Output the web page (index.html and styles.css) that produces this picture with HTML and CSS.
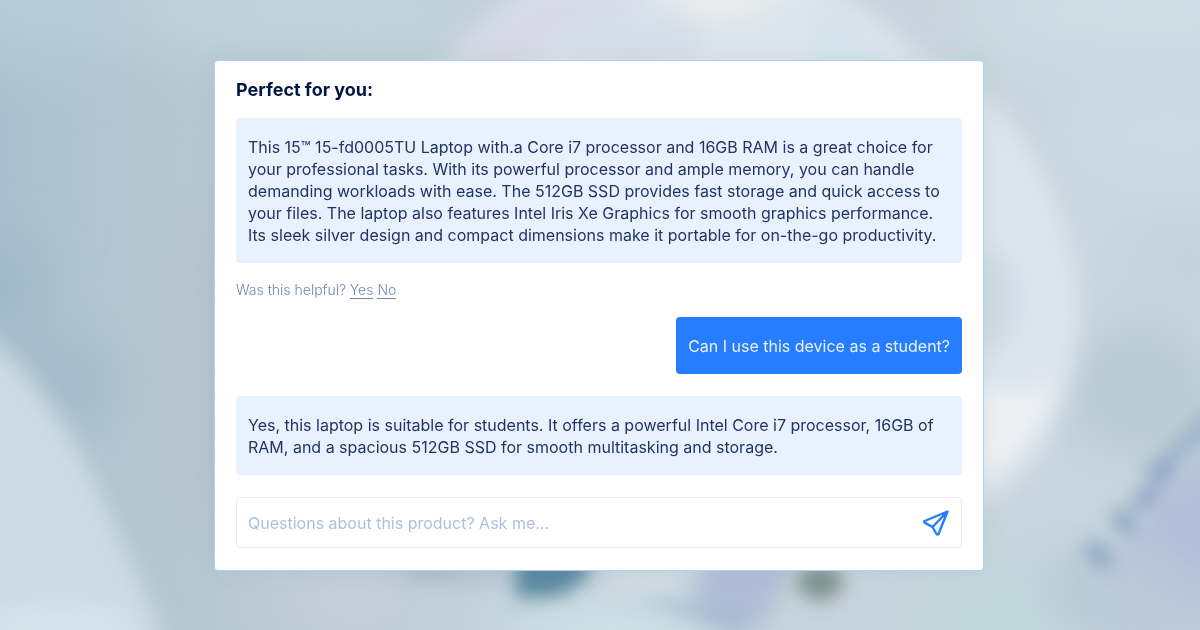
FILE: index.html
```html
<!DOCTYPE html>
<html lang="en">
<head>
<meta charset="utf-8">
<meta name="viewport" content="width=device-width, initial-scale=1">
<title>Product assistant</title>
<link rel="stylesheet" href="styles.css">
</head>
<body>
<svg class="backdrop" viewBox="0 0 1200 630" preserveAspectRatio="xMidYMid slice" aria-hidden="true">
  <defs>
    <linearGradient id="base" x1="0" y1="0" x2="1" y2="0">
      <stop offset="0" stop-color="#abc0ce"/>
      <stop offset=".17" stop-color="#b7c8d1"/>
      <stop offset=".4" stop-color="#c2d1d9"/>
      <stop offset=".8" stop-color="#c8d5dc"/>
      <stop offset="1" stop-color="#cad8df"/>
    </linearGradient>
    <filter id="soft" x="-50%" y="-50%" width="200%" height="200%"><feGaussianBlur stdDeviation="11"/></filter>
    <filter id="spot" x="-50%" y="-50%" width="200%" height="200%"><feGaussianBlur stdDeviation="9"/></filter>
    <filter id="wide" x="-50%" y="-50%" width="200%" height="200%"><feGaussianBlur stdDeviation="30"/></filter>
  </defs>
  <rect width="1200" height="630" fill="url(#base)"/>
  <g filter="url(#wide)">
    <ellipse cx="60" cy="0" rx="130" ry="60" fill="#b8cbd9"/>
    <ellipse cx="290" cy="10" rx="170" ry="50" fill="#c1d3da"/>
    <ellipse cx="0" cy="285" rx="30" ry="40" fill="#97b2c1"/>
    <ellipse cx="60" cy="385" rx="60" ry="40" fill="#a4bac9"/>
    <ellipse cx="205" cy="370" rx="40" ry="170" fill="#b5c3cd"/>
    <ellipse cx="1130" cy="10" rx="160" ry="40" fill="#cfe0e5"/>
    <ellipse cx="1160" cy="133" rx="90" ry="28" fill="#cfdfe6"/>
    <ellipse cx="1190" cy="261" rx="50" ry="25" fill="#bccbda"/>
    <ellipse cx="1140" cy="390" rx="80" ry="70" fill="#b9cad1"/>
    <ellipse cx="1000" cy="620" rx="90" ry="50" fill="#c1d8d9"/>
    <ellipse cx="1085" cy="580" rx="50" ry="25" fill="#b2c4d3"/>
    <ellipse cx="1160" cy="620" rx="90" ry="35" fill="#b9c8d8"/>
    <ellipse cx="610" cy="635" rx="110" ry="25" fill="#d4eaec"/>
    <ellipse cx="345" cy="600" rx="80" ry="35" fill="#c5cfda"/>
  </g>
  <g filter="url(#soft)">
    <path d="M425 95Q490-10 600-40H760Q860-10 910 50Q985 80 1030 150Q1082 240 1080 330Q1070 400 1040 450Q1015 490 970 507V95Z" fill="#dde5ec"/>
    <path d="M430 85Q500-5 590-20L660 0Q560 30 520 85Z" fill="#d7dae5"/>
    <ellipse cx="633" cy="42" rx="75" ry="25" fill="#d4dee6"/>
    <path d="M640-30H825L750 15L700 20Z" fill="#e9ecec"/>
    <path d="M810 0Q870 10 890 75H810Z" fill="#d5e4ea"/>
    <ellipse cx="994" cy="300" rx="26" ry="52" fill="#cfdce4"/>
    <path d="M970 375Q1010 410 1058 380Q1045 440 970 490Z" fill="#edf0f3"/>
    <path d="M-30 325Q20 360 45 398Q85 450 110 515Q140 575 160 630L166 680H-30Z" fill="#cddbe2"/>
    <ellipse cx="60" cy="625" rx="80" ry="20" fill="#d4e3e9"/>
    <path d="M1230 425L1190 465L1155 500L1130 540L1150 600L1230 630Z" fill="#b3bfd7"/>
    <path d="M1130 530L1230 600V635L1100 570Z" fill="#b9c6d8"/>
    <path d="M375 560H520V575L480 582L405 574Z" fill="#b5c1d0"/>
    <path d="M605 570H695L670 591H620Z" fill="#d5e0e4"/>
    <path d="M710 560H795L765 625L720 625L690 600Z" fill="#b0bdd6"/>
    <path d="M800 592H860L840 604H800Z" fill="#c8d1dd"/>
  </g>
  <g filter="url(#spot)">
    <path d="M1215 400L1160 455L1165 475L1215 430Z" fill="#9bb2c9"/>
    <ellipse cx="1161" cy="472" rx="15" ry="12" fill="#8fa5c5"/>
    <ellipse cx="1146" cy="498" rx="18" ry="10" transform="rotate(-30 1146 498)" fill="#94a5c6"/>
    <ellipse cx="1124" cy="522" rx="16" ry="10" transform="rotate(40 1124 522)" fill="#8ea5c2"/>
    <ellipse cx="1099" cy="555" rx="17" ry="10" transform="rotate(45 1099 555)" fill="#8ba5c0"/>
    <path d="M516 555H588V578L560 596L516 598Z" fill="#5b89a0"/>
    <ellipse cx="820" cy="582" rx="23" ry="18" fill="#7f938f"/>
    <path d="M630 598L745 610V632L690 617Z" fill="#a6bad0"/>
    <ellipse cx="432" cy="572" rx="25" ry="7" fill="#aabbc2"/>
  </g>
</svg>

<main class="page">
  <section class="card" aria-labelledby="card-title">
    <h1 class="title" id="card-title">Perfect for you:</h1>
    <p class="bubble">This 15™ 15-fd0005TU Laptop with.a Core i7 processor and 16GB RAM is a great choice for your professional tasks. With its powerful processor and ample memory, you can handle demanding workloads with ease. The 512GB SSD provides fast storage and quick access to your files. The laptop also features Intel Iris Xe Graphics for smooth graphics performance. Its sleek silver design and compact dimensions make it portable for on-the-go productivity.</p>
    <p class="feedback">Was this helpful? <a class="vote" href="#yes">Yes</a> <a class="vote" href="#no">No</a></p>
    <p class="bubble bubble-user">Can I use this device as a student?</p>
    <p class="bubble">Yes, this laptop is suitable for students. It offers a powerful Intel Core i7 processor, 16GB of RAM, and a spacious 512GB SSD for smooth multitasking and storage.</p>
    <form class="ask">
      <input class="ask-input" type="text" aria-label="Your question" placeholder="Questions about this product? Ask me...">
      <button class="send" type="button" aria-label="Send">
        <svg class="send-icon" viewBox="0 0 28 28" aria-hidden="true"><path d="M25.500 2.500L2.700 12Q1.800 12.800 2.600 13.600L10.500 18L14.500 25Q15.600 26.200 16.500 25Z M25.500 2.500L10.500 18"/></svg>
      </button>
    </form>
  </section>
</main>
</body>
</html>
```
FILE: styles.css
```css
* {
  box-sizing: border-box;
}

body {
  margin: 0;
  font-family: Inter, "Liberation Sans", sans-serif;
  font-size: 16px;
  line-height: 22px;
  color: #223463;
}

.backdrop {
  position: fixed;
  inset: 0;
  width: 100%;
  height: 100%;
  z-index: -1;
}

.page {
  display: flex;
  justify-content: center;
  padding: 60px 18px 56px 16px;
}

.card {
  display: flex;
  flex-direction: column;
  width: 100%;
  max-width: 770px;
  padding: 16px 21px 22px;
  background: #fff;
  border: 1px solid #b0cdff;
  border-radius: 4px;
  box-shadow: 0 0 24px rgba(80, 100, 130, 0.08);
}

.title {
  margin: 0 0 15px;
  font-size: 18px;
  line-height: 26px;
  font-weight: 700;
  color: #001645;
}

.bubble {
  margin: 0;
  padding: 18px 12px 17px;
  background: #e8f2ff;
  border-radius: 4px;
}

.feedback {
  margin: 16px 0;
  font-size: 14px;
  font-weight: 300;
  color: #7189b3;
}

.vote {
  color: inherit;
  text-decoration: none;
  border-bottom: 1px solid currentColor;
}

.bubble-user {
  align-self: flex-end;
  margin-bottom: 22px;
  background: #267dff;
  color: #e7f2ff;
}

.ask {
  display: flex;
  align-items: center;
  height: 51px;
  margin-top: 22px;
  padding: 0 11px;
  border: 1px solid #e5eefb;
  border-radius: 4px;
}

.ask-input {
  flex: 1;
  min-width: 0;
  padding: 0;
  border: 0;
  outline: 0;
  background: none;
  font: inherit;
  color: inherit;
}

.ask-input::placeholder {
  color: #afbfdc;
  opacity: 1;
}

.send {
  display: flex;
  padding: 0;
  border: 0;
  background: none;
  cursor: pointer;
}

.send-icon {
  width: 28px;
  height: 28px;
  fill: none;
  stroke: #267dff;
  stroke-width: 2.4;
  stroke-linejoin: round;
  stroke-linecap: round;
}
```
